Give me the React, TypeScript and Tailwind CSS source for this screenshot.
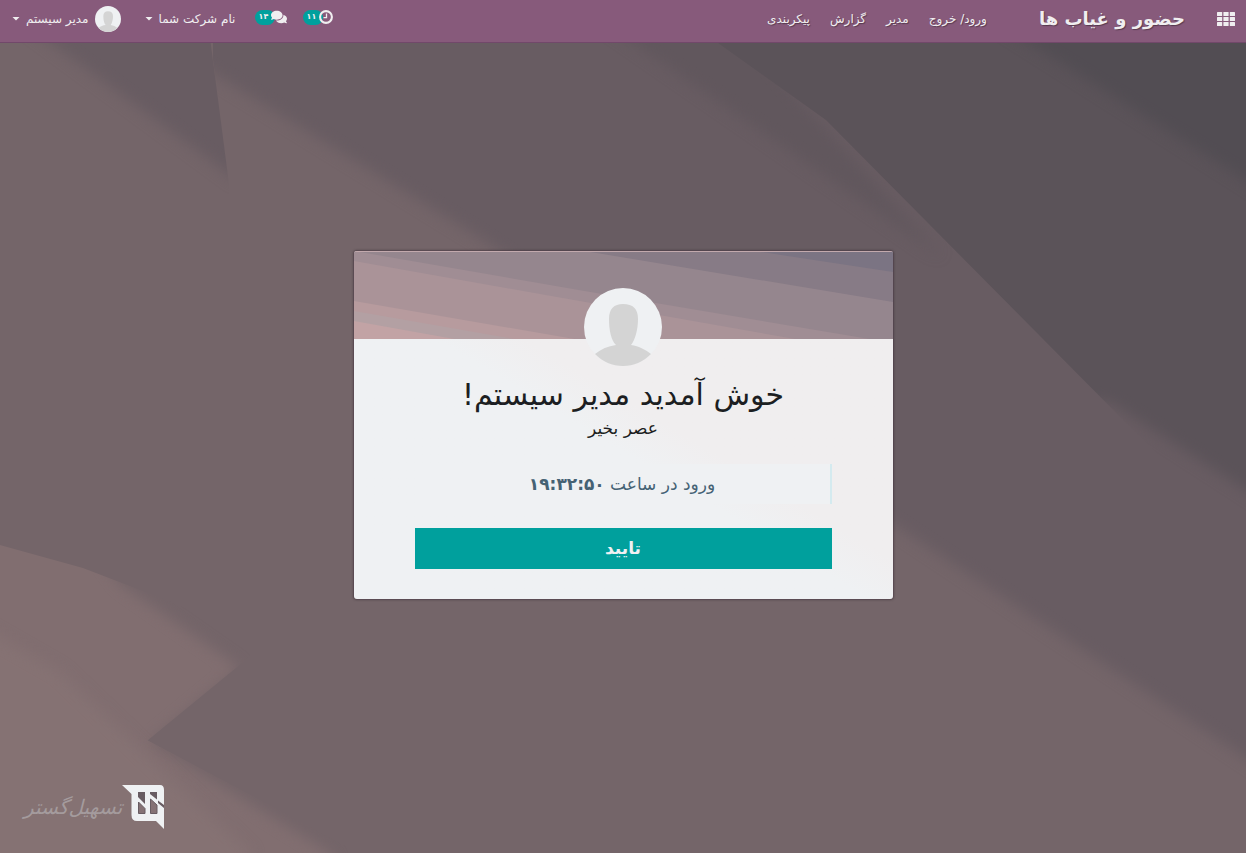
import React from "react";
import { FaComments } from "react-icons/fa";

const navLinks = ["ورود/ خروج", "مدیر", "گزارش", "پیکربندی"];

function Backdrop() {
  return (
    <svg
      className="absolute inset-0 h-full w-full"
      viewBox="0 0 1246 853"
      preserveAspectRatio="none"
      aria-hidden="true"
    >
      <defs>
        <filter id="soft" x="-5%" y="-5%" width="110%" height="110%" colorInterpolationFilters="sRGB">
          <feGaussianBlur stdDeviation="7" />
        </filter>
        <clipPath id="leftShard">
          <path d="M0 0H205L229 184V300H0Z" />
        </clipPath>
        <clipPath id="rightShard">
          <path d="M213 60V0H1300V853H300V320L229 184Z" />
        </clipPath>
        <clipPath id="warmShard">
          <path d="M0 545L83 568L270 640L92 786L147 740L360 853H0Z" />
        </clipPath>
        <clipPath id="duskShard">
          <path d="M600 0H1246V544L826 120L700 30Z" />
        </clipPath>
      </defs>
      <rect width="1246" height="853" fill="#746569" />
      <g clipPath="url(#leftShard)">
        <path d="M20 20L240 182L300 -40H20Z" fill="#685c62" filter="url(#soft)" />
      </g>
      <g clipPath="url(#rightShard)">
        <path d="M130 22L480 238L893 524L1300 794V-40H130Z" fill="#685c62" filter="url(#soft)" />
      </g>
      <path d="M600 20L941 256L800 100L700 -20Z" fill="#61575d" filter="url(#soft)" />
      <g clipPath="url(#duskShard)">
        <path d="M640 0L800 140L1050 400L1110 402L1300 525V-40H640Z" fill="#5b5359" filter="url(#soft)" />
        <path d="M985 15L1300 215V-40H985Z" fill="#524d53" filter="url(#soft)" />
      </g>
      <g clipPath="url(#warmShard)">
        <path d="M-40 500H60L120 584L240 668L150 742L330 853L350 900H-40Z" fill="#816e70" filter="url(#soft)" />
        <path d="M-40 615L60 672L250 853V900H-40Z" fill="#857273" filter="url(#soft)" />
      </g>
    </svg>
  );
}

function Avatar({ className }: { className: string }) {
  return (
    <svg className={className} viewBox="0 0 78 78" role="img" aria-label="مدیر سیستم">
      <circle cx="39" cy="39" r="39" fill="#eff1f3" />
      <path
        d="M39 16C49 16 54 21 54 31C54 42 51 52 47 57C55 58 62 62 67 66C59 74 50 78 39 78C28 78 19 74 11 66C17 61 24 58 32 57C27 52 25 42 25 31C25 21 30 16 39 16Z"
        fill="#d4d4d4"
      />
    </svg>
  );
}

function ClockIcon() {
  return (
    <svg className="relative z-10 size-[14px]" viewBox="0 0 14 14" fill="none" stroke="currentColor" aria-hidden="true">
      <circle cx="7" cy="7" r="5.9" strokeWidth="2.1" />
      <path d="M7.5 3.5V7.6H4.5" strokeWidth="1.3" />
    </svg>
  );
}

function AppsIcon() {
  return (
    <svg className="h-[14px] w-[18px]" viewBox="0 0 18 14" fill="currentColor" aria-hidden="true">
      {[0, 5, 10].map((y) =>
        [0, 6.4, 12.8].map((x) => <rect key={`${x}-${y}`} x={x} y={y} width="5.2" height="4" rx="0.5" />),
      )}
    </svg>
  );
}

function Caret() {
  return (
    <svg className="h-1 w-2" viewBox="0 0 8 4" fill="currentColor" aria-hidden="true">
      <path d="M0.5 0H7.5L4 3.5Z" />
    </svg>
  );
}

function Badge({ children }: { children: React.ReactNode }) {
  return (
    <span className="-mr-1 flex h-[15px] w-5 items-center justify-center rounded-full bg-[#00a09d] pr-1 text-[8px] leading-none font-bold">
      {children}
    </span>
  );
}

function Header() {
  return (
    <header className="relative flex h-[43px] items-center border-b border-[#71486a] bg-[#875a7b] pr-[11px] pl-3 text-xs text-[#f0eef0] text-shadow-[1px_1px_1px_rgb(0_0_0/0.35)]">
      <button type="button" aria-label="برنامه‌ها" className="pb-1">
        <AppsIcon />
      </button>
      <a href="#home" className="mr-8 pb-1 text-lg font-bold whitespace-nowrap">
        حضور و غیاب ها
      </a>
      <nav className="mr-13 flex gap-5 pb-1 whitespace-nowrap">
        {navLinks.map((label) => (
          <a key={label} href="#menu">
            {label}
          </a>
        ))}
      </nav>
      <div className="mr-auto flex items-center pb-1 whitespace-nowrap">
        <button type="button" aria-label="فعالیت‌ها" className="flex items-center pb-1">
          <ClockIcon />
          <Badge>۱۱</Badge>
        </button>
        <button type="button" aria-label="گفتگوها" className="mr-4 flex items-center pb-1">
          <FaComments className="relative z-10 size-4" />
          <Badge>۱۴</Badge>
        </button>
        <button type="button" className="mr-5 flex items-center gap-1.5">
          نام شرکت شما
          <Caret />
        </button>
        <button type="button" className="mr-6 flex items-center gap-1.5">
          <Avatar className="size-[26px]" />
          مدیر سیستم
          <Caret />
        </button>
      </div>
    </header>
  );
}

function CardBanner() {
  return (
    <svg className="h-[88px] w-full" viewBox="0 0 538 88" preserveAspectRatio="none" aria-hidden="true">
      <rect width="538" height="88" fill="#95868e" />
      <path d="M230 0L538 51V0Z" fill="#877b86" />
      <path d="M400 0L538 21V0Z" fill="#7b7483" />
      <path d="M0 0L230 40L538 92H0Z" fill="#a08d94" />
      <path d="M0 10L180 42L440 88H0Z" fill="#aa9398" />
      <path d="M0 50L220 88H0Z" fill="#b79b9e" />
      <path d="M0 60L160 88H0Z" fill="#b3a0a3" />
      <path d="M0 70L100 88H0Z" fill="#c2a3a5" />
      <path d="M0 0.5H538" stroke="#c2a9ad" />
    </svg>
  );
}

function WelcomeCard() {
  return (
    <main className="flex w-[539px] max-w-full flex-col items-center overflow-hidden rounded-[3px] bg-linear-31 from-[#eff1f3] from-46% to-[#f0eeef] to-54% text-center shadow-[0_0_2px_1px_rgb(60_45_55/0.6)]">
      <CardBanner />
      <Avatar className="relative -mt-[51px] size-[78px]" />
      <h1 className="mt-2 text-[30px] leading-[42px] text-[#1c1e22]">خوش آمدید مدیر سیستم!</h1>
      <p className="text-[17px] leading-6 text-[#1c1e22]">عصر بخیر</p>
      <div className="flex w-full flex-col gap-6 px-[61px] pt-6 pb-[30px]">
        <p className="border-r-2 border-[#d4eaef] bg-[#eff1f3] text-[17px] leading-10 text-[#456274]">
          ورود در ساعت <b>۱۹:۳۲:۵۰</b>
        </p>
        <button type="button" className="h-[41px] bg-[#00a09d] text-[17px] font-bold text-[#eff1f3]">
          تایید
        </button>
      </div>
    </main>
  );
}

function BrandLogo() {
  return (
    <a href="#brand" className="flex items-center text-[#a49b9d]">
      <svg className="h-11 w-[43px]" viewBox="0 0 43 44" aria-hidden="true">
        <path
          fill="#eff1f3"
          d="M0 0H38Q42 0 42 5V44L34 36H15Q9.500 36 9.500 30V9Z"
        />
        <path fill="#685c62" d="M16 7H23V19L16 12ZM28 7H35V14.500L28 9ZM36 15.500L42 20V23L36 18Z" />
        <path fill="#857275" stroke="#685c62" d="M16.500 17L23 23.500V28.500H16.500ZM28.500 14L35 20V28.500H28.500Z" />
      </svg>
      <span className="text-xl italic">تسهیل‌گستر</span>
    </a>
  );
}

export default function App() {
  return (
    <div
      dir="rtl"
      lang="fa"
      className="relative flex min-h-screen flex-col overflow-hidden bg-[#746569] font-['DejaVu_Sans',sans-serif]"
    >
      <Backdrop />
      <Header />
      <div className="relative flex flex-1 flex-col items-center pt-52">
        <WelcomeCard />
      </div>
      <footer className="relative flex justify-end pb-6 pl-6">
        <BrandLogo />
      </footer>
    </div>
  );
}
